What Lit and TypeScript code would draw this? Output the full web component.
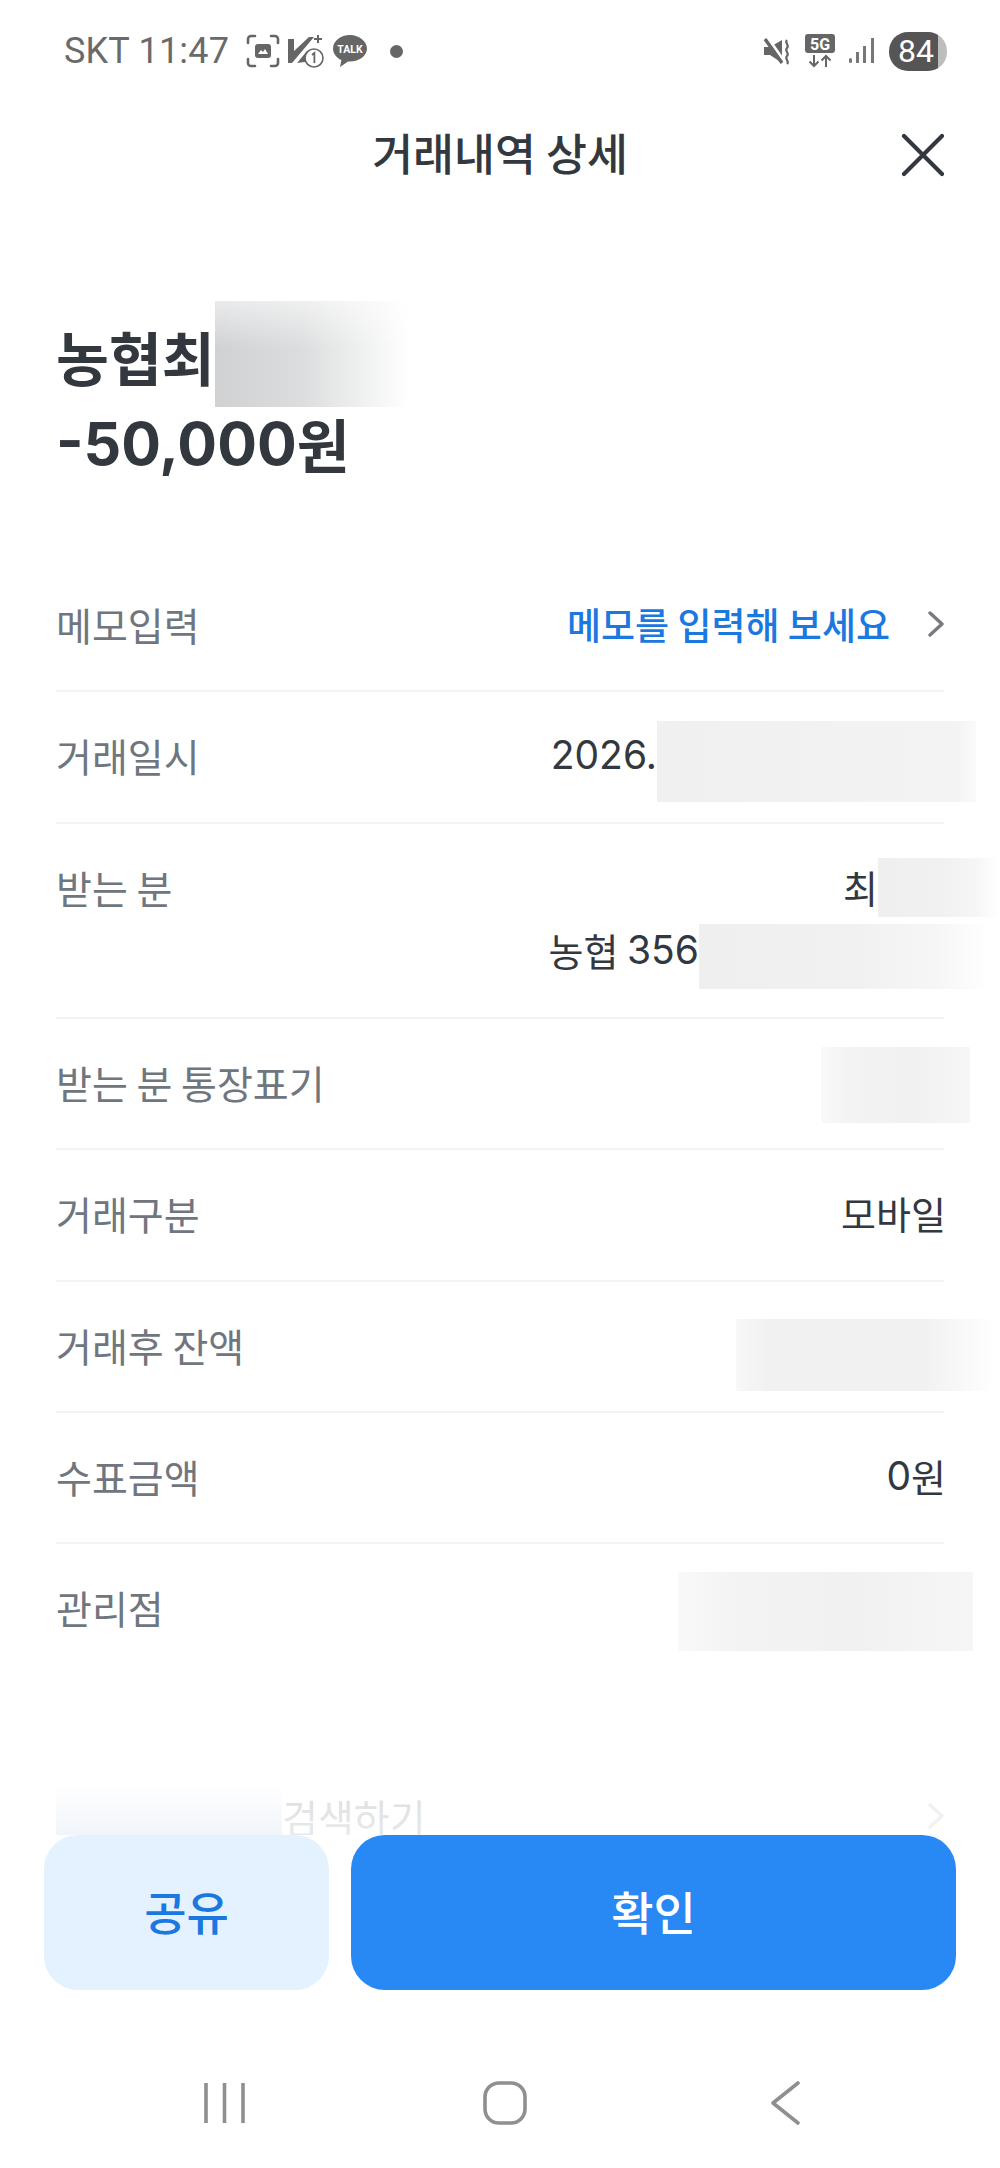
import { LitElement, html, css, svg } from 'lit';
import { customElement } from 'lit/decorators.js';

type Patch = { w: number; h: number; over: number; dy: number; bg: string };

const flat = 'linear-gradient(90deg,#f0f0f0 0%,#f2f2f2 60%,#f3f3f3 94%,#fafafa 100%)';
const fadeRight = 'linear-gradient(90deg,#efefef 0%,#f1f1f1 55%,#f6f6f6 82%,#fff 100%)';
const fadeBoth = 'linear-gradient(90deg,#f8f8f8 0%,#f1f1f1 12%,#f1f1f1 72%,#fff 100%)';
const faint = 'linear-gradient(90deg,#f9f9f9 0%,#f3f3f3 20%,#f1f1f1 60%,#f6f6f6 100%)';

const patchStyle = (p: Patch) => {
  const m = -(p.h - 48) / 2;
  return `width:${p.w}px;height:${p.h}px;margin:${m + p.dy}px ${-p.over}px ${m - p.dy}px 0;background:${p.bg}`;
};

const redacted = (p: Patch) => html`<span class="patch" style=${patchStyle(p)}></span>`;

@customElement('app-root')
export class AppRoot extends LitElement {
  static styles = css`
    :host {
      display: block;
      position: relative;
      width: 1000px;
      height: 2168px;
      overflow: hidden;
      background: #fff;
      font-family: 'Noto Sans CJK KR', 'Noto Sans', sans-serif;
      color: #33383f;
    }

    .status {
      height: 102px;
      padding: 0 53px 0 64px;
      display: flex;
      align-items: center;
      box-sizing: border-box;
      color: #6a6a6a;
    }

    .clock {
      font-family: Roboto, sans-serif;
      font-size: 36px;
      line-height: 44px;
      letter-spacing: 0.2px;
      white-space: nowrap;
    }

    .status svg {
      display: block;
      flex: none;
    }

    .status-left {
      display: flex;
      align-items: center;
      margin-left: 17px;
      gap: 7px;
    }

    .dot {
      width: 13px;
      height: 13px;
      border-radius: 50%;
      background: #666;
      margin-left: 15px;
    }

    .status-right {
      margin-left: auto;
      display: flex;
      align-items: center;
      gap: 14px;
    }

    .battery {
      width: 58px;
      height: 39px;
      border-radius: 19px;
      background: linear-gradient(90deg, #555 0 84%, #bdbdbd 84%);
      color: #fff;
      font-family: Roboto, sans-serif;
      font-size: 32px;
      line-height: 39px;
      text-align: center;
      padding-right: 4px;
      box-sizing: border-box;
    }

    .header {
      height: 106px;
      display: grid;
      grid-template-columns: 1fr auto 1fr;
      align-items: center;
      padding: 0 56px;
    }

    .title {
      font-size: 44.5px;
      font-weight: 500;
      line-height: 56px;
      padding-bottom: 6px;
      white-space: nowrap;
    }

    .close {
      justify-self: end;
      display: block;
    }

    .summary {
      margin-top: 105px;
      padding: 0 56px;
      font-weight: 700;
    }

    .summary-line {
      display: flex;
      align-items: center;
      height: 87px;
      font-size: 57.5px;
      line-height: 87px;
    }

    .summary-line .num {
      font-family: Inter, sans-serif;
      font-size: 59px;
      font-weight: 700;
    }

    .list {
      margin-top: 74px;
      padding: 0 56px;
    }

    .row {
      display: flex;
      justify-content: space-between;
      align-items: flex-start;
      padding: 39px 0 43px;
      border-bottom: 2px solid #f3f3f4;
      font-size: 38px;
      line-height: 48px;
      height: 131.4px;
      box-sizing: border-box;
    }

    .row.tall {
      height: 195px;
    }

    .row.last {
      border-bottom: none;
    }

    .label {
      color: #6f767e;
      font-size: 39px;
      white-space: nowrap;
    }

    .values {
      display: flex;
      flex-direction: column;
      align-items: flex-end;
      gap: 15px;
    }

    .value {
      display: flex;
      align-items: center;
      height: 48px;
      white-space: pre;
    }

    .value.end {
      margin-right: -2px;
    }

    .num {
      font-family: Inter, sans-serif;
      font-size: 39px;
      font-weight: 400;
    }

    .patch {
      display: block;
      flex: none;
    }

    .memo {
      color: #1a78e0;
      font-size: 37px;
      font-weight: 500;
      display: flex;
      align-items: center;
      gap: 38px;
    }

    .search {
      margin: 116px 56px 0;
      display: flex;
      justify-content: space-between;
      align-items: center;
      height: 48px;
      line-height: 48px;
    }

    .search-text {
      display: flex;
      align-items: center;
    }

    .search .patch {
      position: relative;
      z-index: 2;
    }

    .footer {
      position: absolute;
      left: 0;
      right: 0;
      bottom: 0;
      z-index: 1;
    }

    .fade {
      height: 70px;
      background: linear-gradient(180deg, rgba(255, 255, 255, 0.72), rgba(255, 255, 255, 0.84));
    }

    .actions {
      background: #fff;
      padding: 0 44px;
      display: flex;
      gap: 22px;
    }

    .btn {
      height: 155px;
      padding-bottom: 6px;
      box-sizing: border-box;
      border-radius: 34px;
      display: flex;
      align-items: center;
      justify-content: center;
      font-size: 46px;
      font-weight: 500;
    }

    .btn.share {
      width: 285px;
      background: #e4f2ff;
      color: #1a78e0;
    }

    .btn.ok {
      flex: 1;
      background: #2888f4;
      color: #fff;
    }

    .nav {
      height: 178px;
      background: #fff;
      display: grid;
      grid-template-columns: 203px 43px 237px 44px 243px 31px;
      align-items: center;
      padding-top: 48px;
      box-sizing: border-box;
    }

    .nav svg {
      display: block;
    }

    .nav .a { grid-column: 2; }
    .nav .b { grid-column: 4; }
    .nav .c { grid-column: 6; }
  `;

  private chevron(color: string) {
    return html`<svg width="16" height="26" viewBox="0 0 16 26" fill="none">
      <path d="M2 2 L14 13 L2 24" stroke=${color} stroke-width="3.4" stroke-linecap="round" stroke-linejoin="round" />
    </svg>`;
  }

  private statusLeftIcons() {
    return html`
      <svg width="34" height="34" viewBox="0 0 34 34" fill="none">
        <path d="M2 9V5a3 3 0 0 1 3-3h4M25 2h4a3 3 0 0 1 3 3v4M32 25v4a3 3 0 0 1-3 3h-4M9 32H5a3 3 0 0 1-3-3v-4"
          stroke="#666" stroke-width="2.6" stroke-linecap="round" />
        <rect x="9" y="10" width="16" height="14" rx="3" fill="#666" />
        <path d="M12 20l3-4 2 2 2-3 3 5z" fill="#fff" />
      </svg>
      <svg width="38" height="34" viewBox="0 0 38 34" fill="none">
        <path d="M1 5h6v12L22 3h5L5 29H1z" fill="#666" />
        <path d="M31 1v8M27 5h8" stroke="#666" stroke-width="2" />
        <path d="M10 29l10-12h5v10z" fill="#666" />
        <circle cx="27" cy="24" r="9" fill="#fff" stroke="#666" stroke-width="1.6" />
        <path d="M25 21l2.4-2v10" stroke="#666" stroke-width="1.8" fill="none" />
      </svg>
      <svg width="36" height="34" viewBox="0 0 36 34">
        <path d="M18 1C8.6 1 1 7 1 14.5c0 5 3.4 9.4 8.4 11.6L8 33l8-5.6c.7.1 1.3.1 2 .1 9.4 0 17-6 17-13S27.400 1 18 1z" fill="#666" />
        <text x="18" y="18.500" text-anchor="middle" font-family="Roboto, sans-serif" font-size="10.500" font-weight="700" fill="#fff">TALK</text>
      </svg>
      <span class="dot"></span>
    `;
  }

  private statusRightIcons() {
    return html`
      <svg width="28" height="28" viewBox="0 0 28 28" fill="none">
        <path d="M1 10h6L19 3v23L7 18H1z" fill="#666" />
        <path d="M5 1l16 23" stroke="#fff" stroke-width="3" />
        <path d="M2 2l17 24" stroke="#666" stroke-width="3.400" />
        <path d="M24 3c-3 3 3 5 0 8s3 5 0 8 3 5 0 8" stroke="#666" stroke-width="2.200" />
      </svg>
      <svg width="30" height="34" viewBox="0 0 30 34" fill="none">
        <rect x="0" y="0" width="30" height="19" rx="3" fill="#666" />
        <text x="15" y="15.500" text-anchor="middle" font-family="Roboto, sans-serif" font-size="16" font-weight="700" fill="#fff">5G</text>
        <path d="M9 21v11M4.500 27.500 9 32l4.500-4.500M21 33V22M16.500 26.500 21 22l4.500 4.500" stroke="#666" stroke-width="2" />
      </svg>
      <svg width="26" height="28" viewBox="0 0 26 28" fill="#777">
        <rect x="0" y="21" width="3" height="5" rx="1.500" />
        <rect x="7" y="15" width="3" height="11" />
        <rect x="14" y="9" width="3" height="17" />
        <rect x="22" y="1" width="3" height="25" />
      </svg>
      <div class="battery">84</div>
    `;
  }

  private navIcons() {
    const stroke = '#8f8f8f';
    return html`
      <svg class="a" width="43" height="44" viewBox="0 0 43 44" fill="none">
        ${[3, 21.500, 40].map((x) => svg`<path d="M${x} 2V42" stroke=${stroke} stroke-width="3.600" />`)}
      </svg>
      <svg class="b" width="44" height="44" viewBox="0 0 44 44" fill="none">
        <rect x="2" y="2" width="40" height="40" rx="14" stroke=${stroke} stroke-width="3.600" />
      </svg>
      <svg class="c" width="31" height="44" viewBox="0 0 31 44" fill="none">
        <path d="M28 2L3 22L28 42" stroke=${stroke} stroke-width="3.600" stroke-linecap="round" stroke-linejoin="round" />
      </svg>
    `;
  }

  render() {
    return html`
      <div class="status">
        <span class="clock">SKT 11:47</span>
        <div class="status-left">${this.statusLeftIcons()}</div>
        <div class="status-right">${this.statusRightIcons()}</div>
      </div>

      <div class="header">
        <span></span>
        <span class="title">거래내역 상세</span>
        <svg class="close" width="44" height="44" viewBox="0 0 44 44" fill="none">
          <path d="M4 3L42 41M42 3L4 41" stroke="#33383f" stroke-width="4.200" stroke-linecap="round" />
        </svg>
      </div>

      <div class="summary">
        <div class="summary-line">
          농협최${redacted({
            w: 194,
            h: 106,
            over: 0,
            dy: -3,
            bg: 'linear-gradient(180deg,rgba(255,255,255,.55),rgba(255,255,255,0) 45%),linear-gradient(90deg,#cfd1d3 0%,#dcddde 45%,#eeefef 74%,#fff 100%)',
          })}
        </div>
        <div class="summary-line"><span class="num">-50,000</span>원</div>
      </div>

      <div class="list">
        <div class="row">
          <span class="label">메모입력</span>
          <span class="memo">메모를 입력해 보세요 ${this.chevron('#777b80')}</span>
        </div>
        <div class="row">
          <span class="label">거래일시</span>
          <div class="value">
            <span class="num">2026.</span>${redacted({ w: 319, h: 81, over: 32, dy: 6, bg: flat })}
          </div>
        </div>
        <div class="row tall">
          <span class="label">받는 분</span>
          <div class="values">
            <div class="value">최${redacted({ w: 120, h: 59, over: 54, dy: 1, bg: fadeRight })}</div>
            <div class="value">농협 <span class="num">356</span>${redacted({ w: 290, h: 65, over: 45, dy: 7, bg: fadeRight })}</div>
          </div>
        </div>
        <div class="row">
          <span class="label">받는 분 통장표기</span>
          <div class="value">${redacted({ w: 149, h: 76, over: 26, dy: 3, bg: faint })}</div>
        </div>
        <div class="row">
          <span class="label">거래구분</span>
          <div class="value end">모바일</div>
        </div>
        <div class="row">
          <span class="label">거래후 잔액</span>
          <div class="value">${redacted({ w: 260, h: 72, over: 52, dy: 10, bg: fadeBoth })}</div>
        </div>
        <div class="row">
          <span class="label">수표금액</span>
          <div class="value end"><span class="num">0</span>원</div>
        </div>
        <div class="row last">
          <span class="label">관리점</span>
          <div class="value">${redacted({ w: 295, h: 79, over: 29, dy: 4, bg: faint })}</div>
        </div>
      </div>

      <div class="search">
        <div class="search-text">
          ${redacted({
            w: 226,
            h: 50,
            over: 0,
            dy: -6,
            bg: 'linear-gradient(180deg,#fff,#f1f5fa)',
          })}<span class="label">검색하기</span>
        </div>
        ${this.chevron('#b5b7ba')}
      </div>

      <div class="footer">
        <div class="fade"></div>
        <div class="actions">
          <div class="btn share">공유</div>
          <div class="btn ok">확인</div>
        </div>
        <div class="nav">${this.navIcons()}</div>
      </div>
    `;
  }
}

declare global {
  interface HTMLElementTagNameMap {
    'app-root': AppRoot;
  }
}
